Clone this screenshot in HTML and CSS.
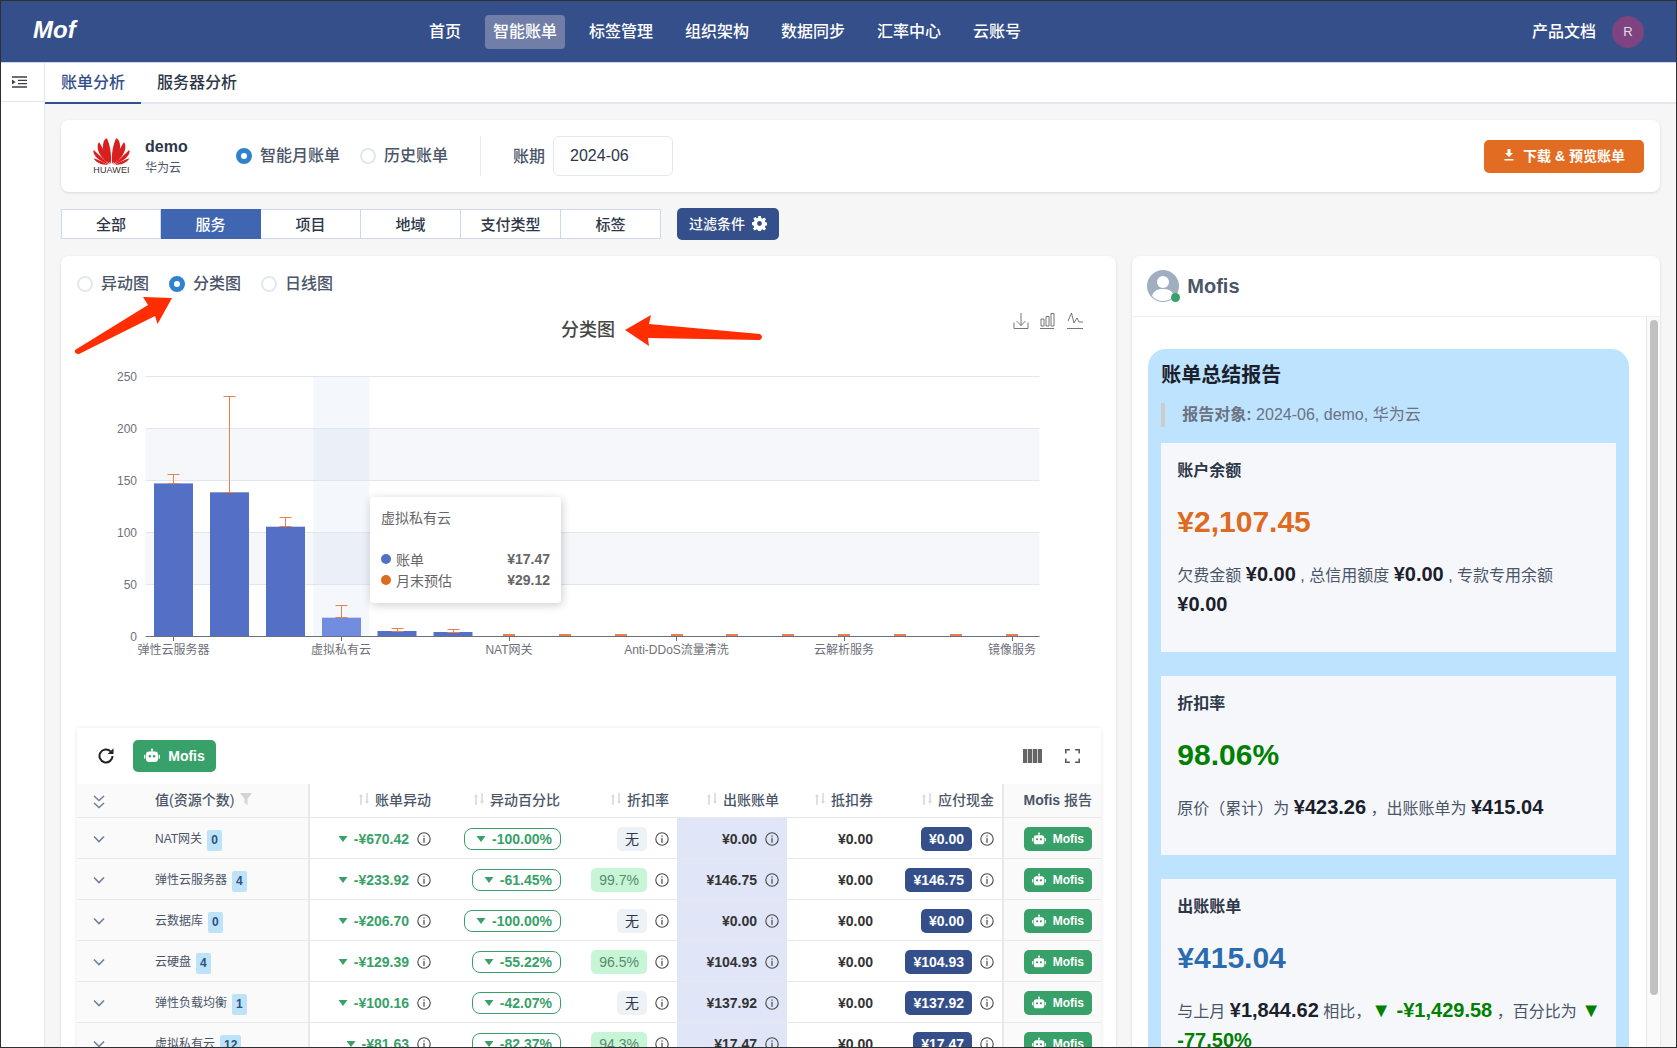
FILE: index.html
```html
<!DOCTYPE html>
<html lang="zh-CN">
<head>
    <meta charset="UTF-8">
    <title>Mof - 账单分析</title>
    <link rel="stylesheet" href="styles.css">
</head>
<body>
    <!-- shared icons -->
    <svg class="icon-defs" xmlns="http://www.w3.org/2000/svg">
        <symbol id="i-info" viewBox="0 0 14 14">
            <circle cx="7" cy="7" r="6.2" fill="none" stroke="currentColor" stroke-width="1.1"/>
            <rect x="6.4" y="5.8" width="1.2" height="5" fill="currentColor"/>
            <rect x="6.4" y="3.4" width="1.2" height="1.3" fill="currentColor"/>
        </symbol>
        <symbol id="i-bot" viewBox="0 0 16 16">
            <rect x="7.4" y="1" width="1.2" height="3" fill="currentColor"/>
            <circle cx="8" cy="1.6" r="1.1" fill="currentColor"/>
            <path fill="currentColor" fill-rule="evenodd" d="M5 3.6h6a3 3 0 0 1 3 3v4.4a3 3 0 0 1-3 3H5a3 3 0 0 1-3-3V6.600a3 3 0 0 1 3-3zM5.800 7a1.300 1.300 0 1 0 0 2.600 1.300 1.300 0 0 0 0-2.600zm4.400 0a1.300 1.300 0 1 0 0 2.600 1.300 1.300 0 0 0 0-2.600z"/>
            <rect x="0" y="6.800" width="1.400" height="4" rx=".7" fill="currentColor"/>
            <rect x="14.600" y="6.800" width="1.400" height="4" rx=".7" fill="currentColor"/>
        </symbol>
        <symbol id="i-sort" viewBox="0 0 10 14">
            <path fill="currentColor" d="M2 2 L4 5 H2.800 V13 H1.200 V5 H0 Z"/>
            <path fill="currentColor" d="M8 12 L6 9 H7.200 V1 H8.800 V9 H10 Z"/>
        </symbol>
        <symbol id="i-down" viewBox="0 0 10 8">
            <path fill="currentColor" d="M0.500 1 H9.500 L5 7 Z"/>
        </symbol>
        <symbol id="i-chevron" viewBox="0 0 12 8">
            <path fill="none" stroke="currentColor" stroke-width="1.600" d="M1 1.500 L6 6.500 L11 1.500"/>
        </symbol>
    </svg>

    <div class="window">
        <header class="topbar">
            <div class="logo">Mof</div>
            <nav class="topnav">
                <a class="topnav-item">首页</a>
                <a class="topnav-item active">智能账单</a>
                <a class="topnav-item">标签管理</a>
                <a class="topnav-item">组织架构</a>
                <a class="topnav-item">数据同步</a>
                <a class="topnav-item">汇率中心</a>
                <a class="topnav-item">云账号</a>
            </nav>
            <div class="topbar-right">
                <a class="docs-link">产品文档</a>
                <div class="avatar">R</div>
            </div>
        </header>

        <div class="layout">
            <aside class="sidebar">
                <div class="sidebar-toggle">
                    <svg width="15" height="12" viewBox="0 0 15 12">
                        <path fill="none" stroke="#3a3f4a" stroke-width="1.300" d="M0 1 H15 M6 4.300 H15 M6 7.700 H15 M0 11 H15"/>
                        <path fill="#3a3f4a" d="M0 3.500 L3.600 6 L0 8.500 Z"/>
                    </svg>
                </div>
            </aside>

            <main class="main">
                <div class="page-tabs">
                    <a class="page-tab active">账单分析</a>
                    <a class="page-tab">服务器分析</a>
                </div>

                <div class="content">
                    <section class="account-card">
                        <div class="brand">
                            <svg class="brand-mark" viewBox="0 0 36 27">
                                <g id="petals" fill="#d8201f">
                                    <path d="M17.300 26 C12 20 8.500 13 10 6 C10.500 3 12 1.500 13.500 1 C16 6 18.500 16 17.300 26 Z"/>
                                    <path d="M16.300 26.300 C10 22 4.500 16 4.500 9 C4.500 7.500 5 6 6 5 C9 10 14.500 18 16.300 26.300 Z"/>
                                    <path d="M15.500 26.800 C9 24.500 2 20.500 .5 15 C.3 14 .4 13 .8 12.500 C5 17 11.500 22 15.500 26.800 Z"/>
                                    <path d="M14.500 27 C9 27 3.500 25.500 .5 20.500 C5 22 11 24.500 14.500 27 Z"/>
                                </g>
                                <use href="#petals" transform="translate(36 0) scale(-1 1)"/>
                            </svg>
                            <div class="brand-word">HUAWEI</div>
                        </div>
                        <div class="account-name">
                            <div class="account-title">demo</div>
                            <div class="account-sub">华为云</div>
                        </div>
                        <div class="radio-group bill-type">
                            <label class="radio"><span class="radio-dot checked"></span>智能月账单</label>
                            <label class="radio"><span class="radio-dot"></span>历史账单</label>
                        </div>
                        <div class="divider"></div>
                        <span class="period-label">账期</span>
                        <div class="period-input">2024-06</div>
                        <button class="btn-download">
                            <svg width="12" height="12" viewBox="0 0 12 12"><path fill="#fff" d="M4.500 0 H7.500 V4 H10 L6 8 L2 4 H4.500 Z M1.500 10 H10.500 V11.500 H1.500 Z"/></svg>
                            下载 &amp; 预览账单
                        </button>
                    </section>

                    <div class="filter-row">
                        <div class="segments">
                            <a class="segment">全部</a>
                            <a class="segment active">服务</a>
                            <a class="segment">项目</a>
                            <a class="segment">地域</a>
                            <a class="segment">支付类型</a>
                            <a class="segment">标签</a>
                        </div>
                        <button class="btn-filter">
                            过滤条件
                            <svg width="15" height="15" viewBox="0 0 16 16"><path fill="#fff" fill-rule="evenodd" d="M6.600 0h2.800l.4 2.200 1.300.6 1.900-1.300 2 2-1.300 1.900.6 1.300 2.200.4v2.800l-2.200.4-.6 1.300 1.300 1.900-2 2-1.900-1.300-1.300.6-.4 2.200H6.600l-.4-2.200-1.300-.6-1.900 1.300-2-2 1.300-1.900-.6-1.300L-.1 9.400V6.600l2.200-.4.6-1.300L1.400 3l2-2 1.900 1.300 1.300-.6zM8 5.400a2.600 2.600 0 1 0 0 5.200 2.600 2.600 0 0 0 0-5.200z"/></svg>
                        </button>
                    </div>

                    <div class="panels">
                        <section class="panel chart-panel">
                            <div class="radio-group chart-type">
                                <label class="radio"><span class="radio-dot"></span>异动图</label>
                                <label class="radio"><span class="radio-dot checked"></span>分类图</label>
                                <label class="radio"><span class="radio-dot"></span>日线图</label>
                            </div>

                            <div class="chart">
                                <!-- viewBox follows page coordinates -->
                                <svg class="chart-svg" viewBox="77 294 1023 434">
                                    <text class="chart-title" x="588" y="336" text-anchor="middle">分类图</text>

                                    <g fill="none" stroke="#666" stroke-width=".9">
                                        <path d="M1021 313 V325.500 M1016.500 321 L1021 325.500 L1025.500 321 M1014 322.500 V328.500 H1028 V322.500"/>
                                        <path d="M1040 328.500 H1054 M1041 319 h3 v7 h-3 z M1046 316.500 h3 v9.500 h-3 z M1051 313.500 h3 v12.500 h-3 z"/>
                                        <path d="M1067 328.500 H1083 M1068 321 L1071.500 313 L1074 323 L1077 318 L1079 322 H1083"/>
                                    </g>

                                    <rect x="145.500" y="428" width="894" height="52" fill="#f5f7fb"/>
                                    <rect x="145.500" y="532" width="894" height="52" fill="#f5f7fb"/>
                                    <rect x="313.400" y="376" width="56" height="260" fill="#4a6fc4" fill-opacity=".06"/>
                                    <path d="M145.500 376.500 H1039.500 M145.500 428.500 H1039.500 M145.500 480.500 H1039.500 M145.500 532.500 H1039.500 M145.500 584.500 H1039.500" stroke="#e0e6f1" fill="none"/>

                                    <g class="axis-label" text-anchor="end">
                                        <text x="137" y="381">250</text>
                                        <text x="137" y="433">200</text>
                                        <text x="137" y="485">150</text>
                                        <text x="137" y="537">100</text>
                                        <text x="137" y="589">50</text>
                                        <text x="137" y="641">0</text>
                                    </g>

                                    <g fill="#5470c6">
                                        <rect x="154" y="483.400" width="39" height="152.600"/>
                                        <rect x="210" y="492.300" width="39" height="143.700"/>
                                        <rect x="266" y="526.700" width="39" height="109.300"/>
                                        <rect x="322" y="617.700" width="39" height="18.300" fill="#728ddf"/>
                                        <rect x="377.500" y="631" width="39" height="5"/>
                                        <rect x="433.500" y="632" width="39" height="4"/>
                                    </g>

                                    <g stroke="#e4814f" fill="none">
                                        <path d="M173.500 474.500 V483.500 M167.500 474.500 H179.500 M167.500 483.500 H179.500"/>
                                        <path d="M229.500 396.500 V492.500 M223.500 396.500 H235.500 M223.500 492.500 H235.500"/>
                                        <path d="M285.500 517.500 V526.500 M279.500 517.500 H291.500 M279.500 526.500 H291.500"/>
                                        <path d="M341.500 605.500 V617.500 M335.500 605.500 H347.500 M335.500 617.500 H347.500"/>
                                        <path d="M397.500 628.500 V631.500 M391.500 628.500 H403.500 M391.500 631.500 H403.500"/>
                                        <path d="M453.500 629.500 V632.500 M447.500 629.500 H459.500 M447.500 632.500 H459.500"/>
                                    </g>
                                    <g fill="#e4814f">
                                        <rect x="503" y="634" width="12" height="2"/>
                                        <rect x="559" y="634" width="12" height="2"/>
                                        <rect x="615" y="634" width="12" height="2"/>
                                        <rect x="671" y="634" width="12" height="2"/>
                                        <rect x="726" y="634" width="12" height="2"/>
                                        <rect x="782" y="634" width="12" height="2"/>
                                        <rect x="838" y="634" width="12" height="2"/>
                                        <rect x="894" y="634" width="12" height="2"/>
                                        <rect x="950" y="634" width="12" height="2"/>
                                        <rect x="1006" y="634" width="12" height="2"/>
                                    </g>

                                    <path d="M145.500 636.500 H1039.500 M173.500 636 V641 M341.500 636 V641 M509.500 636 V641 M676.500 636 V641 M844.500 636 V641 M1012.500 636 V641" stroke="#6e7079" fill="none"/>
                                    <g class="axis-label" text-anchor="middle">
                                        <text x="173.500" y="654">弹性云服务器</text>
                                        <text x="341" y="654">虚拟私有云</text>
                                        <text x="509" y="654">NAT网关</text>
                                        <text x="676.500" y="654">Anti-DDoS流量清洗</text>
                                        <text x="844" y="654">云解析服务</text>
                                        <text x="1012" y="654">镜像服务</text>
                                    </g>

                                    <g fill="#ff2d00">
                                        <path d="M75 350 L148 305 L143 297 L172 298 L157.600 324 L155 316 L79 354 Q74 354 75 350 Z"/>
                                        <path d="M625 330 L651 315 L649 324 L760 334 Q764 337 760 340 L648 338 L649 346 Z"/>
                                    </g>
                                </svg>

                                <div class="chart-tooltip">
                                    <div class="tooltip-title">虚拟私有云</div>
                                    <div class="tooltip-row"><span class="tooltip-dot blue"></span>账单<b>¥17.47</b></div>
                                    <div class="tooltip-row"><span class="tooltip-dot orange"></span>月末预估<b>¥29.12</b></div>
                                </div>
                            </div>

                            <div class="table-card">
                                <div class="table-toolbar">
                                    <svg class="refresh-icon" width="18" height="18" viewBox="0 0 18 18">
                                        <path fill="none" stroke="#222" stroke-width="2" d="M15.500 9 A6.500 6.500 0 1 1 13.600 4.400"/>
                                        <path fill="#222" d="M16.500 1.200 V7 H10.700 Z"/>
                                    </svg>
                                    <button class="btn-mofis large"><svg width="16" height="16"><use href="#i-bot"/></svg>Mofis</button>
                                    <div class="toolbar-right">
                                        <svg width="19" height="14" viewBox="0 0 19 14"><path fill="#666" d="M0 0h4.300v14H0zM5 0h4.300v14H5zM10 0h4.300v14H10zM15 0h4v14h-4z"/></svg>
                                        <svg width="15" height="14" viewBox="0 0 15 14"><path fill="none" stroke="#555" stroke-width="1.500" d="M.8 4.500V.8h4M10.200.8h4v3.700M14.200 9.500v3.700h-4M4.800 13.200h-4V9.500"/></svg>
                                    </div>
                                </div>

                                <table class="bill-table">
                                    <colgroup>
                                        <col class="c-expand"><col class="c-name"><col class="c-delta"><col class="c-delta">
                                        <col class="c-rate"><col class="c-bill"><col class="c-voucher"><col class="c-cash"><col class="c-report">
                                    </colgroup>
                                    <thead>
                                        <tr>
                                            <th class="fixed-cell center"><svg class="chevrons" width="12" height="14" viewBox="0 0 12 14"><path fill="none" stroke="#718096" stroke-width="1.500" d="M1 1 L6 5.500 L11 1 M1 8 L6 12.500 L11 8"/></svg></th>
                                            <th class="fixed-cell name-cell fixed-end"><span class="head-name">值(资源个数)<svg width="12" height="12" viewBox="0 0 12 12"><path fill="#d4d4d4" d="M0 0h12L7.500 6v6l-3-2V6z"/></svg></span></th>
                                            <th><span class="head-cell"><svg class="sort" width="10" height="14"><use href="#i-sort"/></svg>账单异动</span></th>
                                            <th><span class="head-cell"><svg class="sort" width="10" height="14"><use href="#i-sort"/></svg>异动百分比</span></th>
                                            <th><span class="head-cell"><svg class="sort" width="10" height="14"><use href="#i-sort"/></svg>折扣率</span></th>
                                            <th><span class="head-cell"><svg class="sort" width="10" height="14"><use href="#i-sort"/></svg>出账账单</span></th>
                                            <th><span class="head-cell"><svg class="sort" width="10" height="14"><use href="#i-sort"/></svg>抵扣券</span></th>
                                            <th><span class="head-cell"><svg class="sort" width="10" height="14"><use href="#i-sort"/></svg>应付现金</span></th>
                                            <th class="fixed-cell fixed-start"><span class="head-cell"><span><b>Mofis</b> 报告</span></span></th>
                                        </tr>
                                    </thead>
                                    <tbody>
                                        <tr>
                                            <td class="fixed-cell center"><svg class="chevron" width="12" height="8"><use href="#i-chevron"/></svg></td>
                                            <td class="fixed-cell name-cell fixed-end">NAT网关<span class="count">0</span></td>
                                            <td><div class="cell"><span class="delta"><svg width="10" height="8"><use href="#i-down"/></svg>-¥670.42</span><svg class="info" width="14" height="14"><use href="#i-info"/></svg></div></td>
                                            <td><div class="cell"><span class="delta-pill"><svg width="10" height="8"><use href="#i-down"/></svg>-100.00%</span></div></td>
                                            <td><div class="cell"><span class="tag">无</span><svg class="info" width="14" height="14"><use href="#i-info"/></svg></div></td>
                                            <td class="bill-cell"><div class="cell"><b>¥0.00</b><svg class="info" width="14" height="14"><use href="#i-info"/></svg></div></td>
                                            <td><div class="cell"><b>¥0.00</b></div></td>
                                            <td><div class="cell"><span class="cash">¥0.00</span><svg class="info" width="14" height="14"><use href="#i-info"/></svg></div></td>
                                            <td class="fixed-cell fixed-start"><div class="cell"><button class="btn-mofis"><svg width="14" height="14"><use href="#i-bot"/></svg>Mofis</button></div></td>
                                        </tr>
                                        <tr>
                                            <td class="fixed-cell center"><svg class="chevron" width="12" height="8"><use href="#i-chevron"/></svg></td>
                                            <td class="fixed-cell name-cell fixed-end">弹性云服务器<span class="count">4</span></td>
                                            <td><div class="cell"><span class="delta"><svg width="10" height="8"><use href="#i-down"/></svg>-¥233.92</span><svg class="info" width="14" height="14"><use href="#i-info"/></svg></div></td>
                                            <td><div class="cell"><span class="delta-pill"><svg width="10" height="8"><use href="#i-down"/></svg>-61.45%</span></div></td>
                                            <td><div class="cell"><span class="tag good">99.7%</span><svg class="info" width="14" height="14"><use href="#i-info"/></svg></div></td>
                                            <td class="bill-cell"><div class="cell"><b>¥146.75</b><svg class="info" width="14" height="14"><use href="#i-info"/></svg></div></td>
                                            <td><div class="cell"><b>¥0.00</b></div></td>
                                            <td><div class="cell"><span class="cash">¥146.75</span><svg class="info" width="14" height="14"><use href="#i-info"/></svg></div></td>
                                            <td class="fixed-cell fixed-start"><div class="cell"><button class="btn-mofis"><svg width="14" height="14"><use href="#i-bot"/></svg>Mofis</button></div></td>
                                        </tr>
                                        <tr>
                                            <td class="fixed-cell center"><svg class="chevron" width="12" height="8"><use href="#i-chevron"/></svg></td>
                                            <td class="fixed-cell name-cell fixed-end">云数据库<span class="count">0</span></td>
                                            <td><div class="cell"><span class="delta"><svg width="10" height="8"><use href="#i-down"/></svg>-¥206.70</span><svg class="info" width="14" height="14"><use href="#i-info"/></svg></div></td>
                                            <td><div class="cell"><span class="delta-pill"><svg width="10" height="8"><use href="#i-down"/></svg>-100.00%</span></div></td>
                                            <td><div class="cell"><span class="tag">无</span><svg class="info" width="14" height="14"><use href="#i-info"/></svg></div></td>
                                            <td class="bill-cell"><div class="cell"><b>¥0.00</b><svg class="info" width="14" height="14"><use href="#i-info"/></svg></div></td>
                                            <td><div class="cell"><b>¥0.00</b></div></td>
                                            <td><div class="cell"><span class="cash">¥0.00</span><svg class="info" width="14" height="14"><use href="#i-info"/></svg></div></td>
                                            <td class="fixed-cell fixed-start"><div class="cell"><button class="btn-mofis"><svg width="14" height="14"><use href="#i-bot"/></svg>Mofis</button></div></td>
                                        </tr>
                                        <tr>
                                            <td class="fixed-cell center"><svg class="chevron" width="12" height="8"><use href="#i-chevron"/></svg></td>
                                            <td class="fixed-cell name-cell fixed-end">云硬盘<span class="count">4</span></td>
                                            <td><div class="cell"><span class="delta"><svg width="10" height="8"><use href="#i-down"/></svg>-¥129.39</span><svg class="info" width="14" height="14"><use href="#i-info"/></svg></div></td>
                                            <td><div class="cell"><span class="delta-pill"><svg width="10" height="8"><use href="#i-down"/></svg>-55.22%</span></div></td>
                                            <td><div class="cell"><span class="tag good">96.5%</span><svg class="info" width="14" height="14"><use href="#i-info"/></svg></div></td>
                                            <td class="bill-cell"><div class="cell"><b>¥104.93</b><svg class="info" width="14" height="14"><use href="#i-info"/></svg></div></td>
                                            <td><div class="cell"><b>¥0.00</b></div></td>
                                            <td><div class="cell"><span class="cash">¥104.93</span><svg class="info" width="14" height="14"><use href="#i-info"/></svg></div></td>
                                            <td class="fixed-cell fixed-start"><div class="cell"><button class="btn-mofis"><svg width="14" height="14"><use href="#i-bot"/></svg>Mofis</button></div></td>
                                        </tr>
                                        <tr>
                                            <td class="fixed-cell center"><svg class="chevron" width="12" height="8"><use href="#i-chevron"/></svg></td>
                                            <td class="fixed-cell name-cell fixed-end">弹性负载均衡<span class="count">1</span></td>
                                            <td><div class="cell"><span class="delta"><svg width="10" height="8"><use href="#i-down"/></svg>-¥100.16</span><svg class="info" width="14" height="14"><use href="#i-info"/></svg></div></td>
                                            <td><div class="cell"><span class="delta-pill"><svg width="10" height="8"><use href="#i-down"/></svg>-42.07%</span></div></td>
                                            <td><div class="cell"><span class="tag">无</span><svg class="info" width="14" height="14"><use href="#i-info"/></svg></div></td>
                                            <td class="bill-cell"><div class="cell"><b>¥137.92</b><svg class="info" width="14" height="14"><use href="#i-info"/></svg></div></td>
                                            <td><div class="cell"><b>¥0.00</b></div></td>
                                            <td><div class="cell"><span class="cash">¥137.92</span><svg class="info" width="14" height="14"><use href="#i-info"/></svg></div></td>
                                            <td class="fixed-cell fixed-start"><div class="cell"><button class="btn-mofis"><svg width="14" height="14"><use href="#i-bot"/></svg>Mofis</button></div></td>
                                        </tr>
                                        <tr>
                                            <td class="fixed-cell center"><svg class="chevron" width="12" height="8"><use href="#i-chevron"/></svg></td>
                                            <td class="fixed-cell name-cell fixed-end">虚拟私有云<span class="count">12</span></td>
                                            <td><div class="cell"><span class="delta"><svg width="10" height="8"><use href="#i-down"/></svg>-¥81.63</span><svg class="info" width="14" height="14"><use href="#i-info"/></svg></div></td>
                                            <td><div class="cell"><span class="delta-pill"><svg width="10" height="8"><use href="#i-down"/></svg>-82.37%</span></div></td>
                                            <td><div class="cell"><span class="tag good">94.3%</span><svg class="info" width="14" height="14"><use href="#i-info"/></svg></div></td>
                                            <td class="bill-cell"><div class="cell"><b>¥17.47</b><svg class="info" width="14" height="14"><use href="#i-info"/></svg></div></td>
                                            <td><div class="cell"><b>¥0.00</b></div></td>
                                            <td><div class="cell"><span class="cash">¥17.47</span><svg class="info" width="14" height="14"><use href="#i-info"/></svg></div></td>
                                            <td class="fixed-cell fixed-start"><div class="cell"><button class="btn-mofis"><svg width="14" height="14"><use href="#i-bot"/></svg>Mofis</button></div></td>
                                        </tr>
                                    </tbody>
                                </table>
                            </div>
                        </section>

                        <section class="panel chat-panel">
                            <div class="chat-header">
                                <div class="chat-avatar">
                                    <svg width="32" height="32" viewBox="0 0 32 32">
                                        <circle cx="16" cy="16" r="16" fill="#a0aec0"/>
                                        <circle cx="16" cy="12" r="6" fill="#fff"/>
                                        <path fill="#fff" d="M5 26 C7 20 11 19 16 19 C21 19 25 20 27 26 C24 29.500 20 31 16 31 C12 31 8 29.500 5 26 Z"/>
                                    </svg>
                                    <span class="online-dot"></span>
                                </div>
                                <div class="chat-name">Mofis</div>
                            </div>
                            <div class="chat-body">
                                <div class="chat-scroll">
                                    <article class="report">
                                        <h2 class="report-title">账单总结报告</h2>
                                        <blockquote class="report-target"><b>报告对象:</b> 2024-06, demo, 华为云</blockquote>

                                        <div class="report-section">
                                            <h3>账户余额</h3>
                                            <div class="amount orange">¥2,107.45</div>
                                            <p>欠费金额 <strong>¥0.00</strong> , 总信用额度 <strong>¥0.00</strong> , 专款专用余额 <strong>¥0.00</strong></p>
                                        </div>

                                        <div class="report-section">
                                            <h3>折扣率</h3>
                                            <div class="amount green">98.06%</div>
                                            <p>原价（累计）为 <strong>¥423.26</strong> ，出账账单为 <strong>¥415.04</strong></p>
                                        </div>

                                        <div class="report-section">
                                            <h3>出账账单</h3>
                                            <div class="amount blue">¥415.04</div>
                                            <p>与上月 <strong>¥1,844.62</strong> 相比，<strong class="down">▼ -¥1,429.58</strong> ，百分比为 <strong class="down">▼ -77.50%</strong></p>
                                        </div>
                                    </article>
                                </div>
                                <div class="scrollbar"><div class="scrollbar-thumb"></div></div>
                            </div>
                        </section>
                    </div>
                </div>
            </main>
        </div>
    </div>
</body>
</html>
```

FILE: styles.css
```css
* {
    box-sizing: border-box;
}

html, body {
    margin: 0;
    padding: 0;
    height: 100%;
    overflow: hidden;
}

body {
    background-color: #f6f6f7;
    color: #2d3748;
    font-family: "Liberation Sans", "Noto Sans CJK SC", sans-serif;
    font-size: 16px;
}

.icon-defs {
    display: none;
}

.window {
    height: 1048px;
    display: flex;
    flex-direction: column;
    border: 1px solid #2f2f2f;
    overflow: hidden;
}

/* top bar */
.topbar {
    flex: none;
    height: 62px;
    padding: 0 32px;
    display: flex;
    align-items: center;
    background-color: #354f8a;
    border-bottom: 1px solid #cfd8ea;
    color: #fff;
}

.logo {
    width: 388px;
    padding-bottom: 3px;
    font-size: 24px;
    font-weight: 700;
    font-style: italic;
}

.topnav {
    display: flex;
    gap: 16px;
}

.topnav-item {
    height: 34px;
    padding: 0 8px 3px;
    display: flex;
    align-items: center;
    border-radius: 4px;
    font-weight: 500;
}

.topnav-item.active {
    background-color: #717fa8;
}

.topbar-right {
    margin-left: auto;
    display: flex;
    align-items: center;
    gap: 16px;
}

.docs-link {
    padding-bottom: 3px;
    font-weight: 500;
}

.avatar {
    width: 32px;
    height: 32px;
    border-radius: 50%;
    background-color: #7d4480;
    color: #e6dbe8;
    font-size: 13px;
    display: flex;
    align-items: center;
    justify-content: center;
}

/* page layout */
.layout {
    flex: 1;
    min-height: 0;
    display: flex;
}

.sidebar {
    flex: none;
    width: 44px;
    background-color: #fff;
    border-right: 1px solid #e2e8f0;
}

.sidebar-toggle {
    height: 39px;
    padding-left: 11px;
    display: flex;
    align-items: center;
    border-bottom: 1px solid #e2e8f0;
}

.main {
    flex: 1;
    min-width: 0;
    display: flex;
    flex-direction: column;
}

.page-tabs {
    flex: none;
    height: 41px;
    display: flex;
    background-color: #fff;
    border-bottom: 2px solid #e2e8f0;
}

.page-tab {
    height: 41px;
    padding: 0 16px 4px;
    display: flex;
    align-items: center;
    font-weight: 500;
    border-bottom: 2px solid transparent;
}

.page-tab.active {
    color: #354f8a;
    border-bottom-color: #354f8a;
}

.content {
    flex: 1;
    min-height: 0;
    padding: 16px 16px 0;
    display: flex;
    flex-direction: column;
}

/* account card */
.account-card {
    flex: none;
    height: 72px;
    padding: 0 16px 0 32px;
    display: flex;
    align-items: center;
    background-color: #fff;
    border-radius: 8px;
    box-shadow: 0 1px 3px rgba(0, 0, 0, 0.12);
}

.brand {
    width: 37px;
    margin-right: 15px;
}

.brand-mark {
    display: block;
    width: 37px;
    height: 28px;
}

.brand-word {
    margin-top: 1px;
    font-size: 9px;
    line-height: 9px;
    letter-spacing: 0.1px;
    text-align: center;
    white-space: nowrap;
    color: #333;
}

.account-name {
    width: 91px;
    padding-top: 2px;
}

.account-title {
    font-weight: 700;
    line-height: 22px;
}

.account-sub {
    font-size: 12px;
    line-height: 20px;
    color: #4a5568;
}

.radio-group {
    display: flex;
}

.bill-type {
    gap: 20px;
}

.radio {
    display: flex;
    align-items: center;
    gap: 8px;
    line-height: 22px;
    font-weight: 500;
    color: #4a5568;
}

.radio-dot {
    flex: none;
    width: 16px;
    height: 16px;
    border: 2px solid #e2e8f0;
    border-radius: 50%;
    background-color: #fff;
}

.radio-dot.checked {
    border: 5px solid #3182ce;
}

.divider {
    width: 1px;
    height: 40px;
    margin: 0 32px;
    background-color: #e8ebf0;
}

.period-label {
    font-weight: 500;
    color: #4a5568;
    margin-right: 8px;
    padding-bottom: 2px;
}

.period-input {
    width: 120px;
    height: 40px;
    padding-left: 16px;
    display: flex;
    align-items: center;
    border: 1px solid #e2e8f0;
    border-radius: 6px;
}

.btn-download {
    margin-left: auto;
    width: 160px;
    height: 33px;
    padding: 0 0 2px;
    display: flex;
    align-items: center;
    justify-content: center;
    gap: 8px;
    border: none;
    border-radius: 5px;
    background-color: #e26d22;
    color: #fff;
    font-family: inherit;
    font-size: 14px;
    font-weight: 700;
}

/* filter row */
.filter-row {
    flex: none;
    height: 32px;
    margin: 16px 0;
    display: flex;
    align-items: center;
    gap: 16px;
}

.segments {
    display: flex;
}

.segment {
    width: 100px;
    height: 30px;
    padding-bottom: 2px;
    display: flex;
    align-items: center;
    justify-content: center;
    background-color: #fff;
    border: 1px solid #cfd8e6;
    border-left: none;
    font-size: 15px;
    font-weight: 500;
}

.segment:first-child {
    border-left: 1px solid #cfd8e6;
}

.segment.active {
    background-color: #4066b2;
    border-color: #4066b2;
    color: #fff;
}

.btn-filter {
    width: 102px;
    height: 32px;
    padding: 0 0 2px;
    display: flex;
    align-items: center;
    justify-content: center;
    gap: 7px;
    border: none;
    border-radius: 5px;
    background-color: #354f8a;
    color: #fff;
    font-family: inherit;
    font-size: 14px;
    font-weight: 500;
}

/* panels */
.panels {
    flex: 1;
    min-height: 0;
    display: grid;
    grid-template-columns: 2fr 1fr;
    gap: 16px;
}

.panel {
    min-height: 1000px;
    background-color: #fff;
    border-radius: 8px;
    box-shadow: 0 1px 3px rgba(0, 0, 0, 0.12);
}

.chart-panel {
    padding: 16px 15px 0 16px;
}

.chart-type {
    height: 22px;
    padding-top: 2px;
    gap: 20px;
}

.chart {
    position: relative;
}

.chart-svg {
    display: block;
    width: 1023px;
    height: 434px;
    overflow: visible;
}

.chart-title {
    font-size: 18px;
    font-weight: 500;
    fill: #464646;
}

.axis-label {
    font-size: 12px;
    fill: #6e7079;
}

.chart-tooltip {
    position: absolute;
    left: 293px;
    top: 203px;
    width: 191px;
    height: 106px;
    padding: 11px;
    background-color: #fff;
    border-radius: 4px;
    box-shadow: 1px 2px 10px rgba(0, 0, 0, 0.2);
    font-size: 14px;
    color: #666;
}

.tooltip-title {
    line-height: 20px;
    margin-bottom: 20px;
}

.tooltip-row {
    height: 21px;
    display: flex;
    align-items: center;
}

.tooltip-row b {
    margin-left: auto;
}

.tooltip-dot {
    width: 10px;
    height: 10px;
    margin-right: 5px;
    border-radius: 50%;
}

.tooltip-dot.blue {
    background-color: #5470c6;
}

.tooltip-dot.orange {
    background-color: #dd6b20;
}

/* table */
.table-card {
    background-color: #fff;
    box-shadow: 0 0 4px rgba(0, 0, 0, 0.1);
}

.table-toolbar {
    height: 56px;
    padding: 0 21px 0 20px;
    display: flex;
    align-items: center;
    gap: 18px;
}

.toolbar-right {
    margin-left: auto;
    display: flex;
    align-items: center;
    gap: 23px;
}

.btn-mofis {
    height: 24px;
    padding: 0 8px;
    display: flex;
    align-items: center;
    justify-content: center;
    gap: 7px;
    border: none;
    border-radius: 5px;
    background-color: #38a169;
    color: #fff;
    font-family: inherit;
    font-size: 12px;
    font-weight: 700;
}

.btn-mofis.large {
    width: 83px;
    height: 32px;
    gap: 8px;
    font-size: 14px;
}

.bill-table {
    width: 1024px;
    table-layout: fixed;
    border-collapse: separate;
    border-spacing: 0;
    font-size: 14px;
}

.c-expand { width: 58px; }
.c-name { width: 175px; }
.c-delta { width: 129px; }
.c-rate { width: 109px; }
.c-bill { width: 110px; }
.c-voucher { width: 94px; }
.c-cash { width: 121px; }
.c-report { width: 99px; }

.bill-table th,
.bill-table td {
    padding: 0 8px;
    border-bottom: 1px solid #e8e8e8;
    text-align: right;
    white-space: nowrap;
}

.bill-table th {
    height: 34px;
    padding-bottom: 3px;
    font-weight: 500;
    color: #4a5568;
}

.bill-table td {
    height: 41px;
    padding-top: 1px;
}

.bill-table .fixed-cell {
    background-color: #fafafa;
}

.bill-table .center {
    padding: 0 14px 0 0;
    text-align: center;
}

.bill-table .name-cell {
    padding-left: 20px;
    text-align: left;
    font-size: 12px;
    color: #4a5568;
}

.bill-table td.name-cell {
    padding-top: 4px;
}

.bill-table th.name-cell {
    font-size: 14px;
}

.bill-table .fixed-end {
    border-right: 2px solid #e8e8e8;
}

.bill-table .fixed-start {
    padding-right: 9px;
    border-left: 2px solid #e8e8e8;
}

.bill-table .bill-cell {
    background-color: #e0e5f8;
}

.head-name {
    display: flex;
    align-items: center;
    gap: 6px;
}

.head-cell {
    display: flex;
    align-items: center;
    justify-content: flex-end;
    gap: 6px;
}

.sort {
    color: #d9d9d9;
}

.chevron {
    color: #718096;
    vertical-align: middle;
}

.chevrons {
    vertical-align: middle;
}

.count {
    display: inline-block;
    margin-left: 5px;
    padding: 0 4px;
    height: 21px;
    line-height: 21px;
    vertical-align: middle;
    background-color: #bee3f8;
    border-radius: 2px;
    color: #2c5282;
    font-size: 12px;
    font-weight: 700;
}

.cell {
    display: flex;
    align-items: center;
    justify-content: flex-end;
    gap: 8px;
    color: #333;
}

.info {
    flex: none;
    color: #4a4a4a;
}

.delta {
    display: flex;
    align-items: center;
    gap: 6px;
    color: #38a169;
    font-weight: 700;
}

.delta-pill {
    height: 22px;
    margin-right: -1px;
    padding: 0 8px 0 11px;
    display: flex;
    align-items: center;
    gap: 6px;
    border: 1px solid #38a169;
    border-radius: 8px;
    color: #38a169;
    font-weight: 700;
}

.tag {
    height: 24px;
    padding: 0 8px 2px;
    display: flex;
    align-items: center;
    background-color: #edf2f7;
    border-radius: 5px;
    color: #2d3748;
}

.tag.good {
    padding-bottom: 0;
    background-color: #c6f6d5;
    color: #5b8a6d;
}

.cash {
    height: 24px;
    padding: 0 8px;
    display: flex;
    align-items: center;
    background-color: #354f8a;
    border-radius: 5px;
    color: #fff;
    font-weight: 700;
}

/* chat panel */
.chat-panel {
    display: flex;
    flex-direction: column;
}

.chat-header {
    flex: none;
    height: 61px;
    padding-left: 15px;
    display: flex;
    align-items: center;
    gap: 8px;
    border-bottom: 1px solid #eeeeee;
}

.chat-avatar {
    position: relative;
    width: 32px;
    height: 32px;
}

.chat-avatar svg {
    display: block;
}

.online-dot {
    position: absolute;
    right: -1px;
    bottom: 0;
    width: 9px;
    height: 9px;
    border-radius: 50%;
    background-color: #38a169;
}

.chat-name {
    font-size: 20px;
    font-weight: 700;
    color: #4a5568;
}

.chat-body {
    flex: 1;
    display: flex;
}

.chat-scroll {
    flex: 1;
    min-width: 0;
    padding: 32px 17px 0 16px;
}

.scrollbar {
    flex: none;
    width: 14px;
    padding: 3px 2px 0 3px;
    border-left: 1px solid #e8e8e8;
    background-color: #fafafa;
}

.scrollbar-thumb {
    height: 675px;
    background-color: #c1c1c1;
    border-radius: 4px;
}

.report {
    padding: 14px 13px 24px;
    background-color: #bee3ff;
    border-radius: 18px;
}

.report-title {
    margin: 0;
    font-size: 20px;
    line-height: 24px;
    font-weight: 700;
    color: #1a202c;
}

.report-target {
    margin: 16px 0;
    padding-left: 17px;
    border-left: 4px solid #cccccc;
    line-height: 24px;
    color: #6b7280;
}

.report-section {
    padding: 17px 10px 31px 16px;
    margin-bottom: 24px;
    background-color: #f6f7fb;
    color: #4a5568;
}

.report-section h3 {
    margin: 0 0 22px;
    font-size: 16px;
    line-height: 22px;
    font-weight: 700;
    color: #2d3748;
}

.amount {
    font-size: 30px;
    line-height: 36px;
    font-weight: 700;
    margin-bottom: 19px;
}

.amount.orange {
    color: #dd6b20;
}

.amount.green {
    color: #008000;
}

.amount.blue {
    color: #2b6cb0;
}

.report-section p {
    margin: 0;
    padding-top: 2px;
    line-height: 30px;
}

.report-section strong {
    font-size: 20px;
    line-height: 1;
    color: #1a202c;
}

.report-section strong.down {
    color: #008000;
}
```
